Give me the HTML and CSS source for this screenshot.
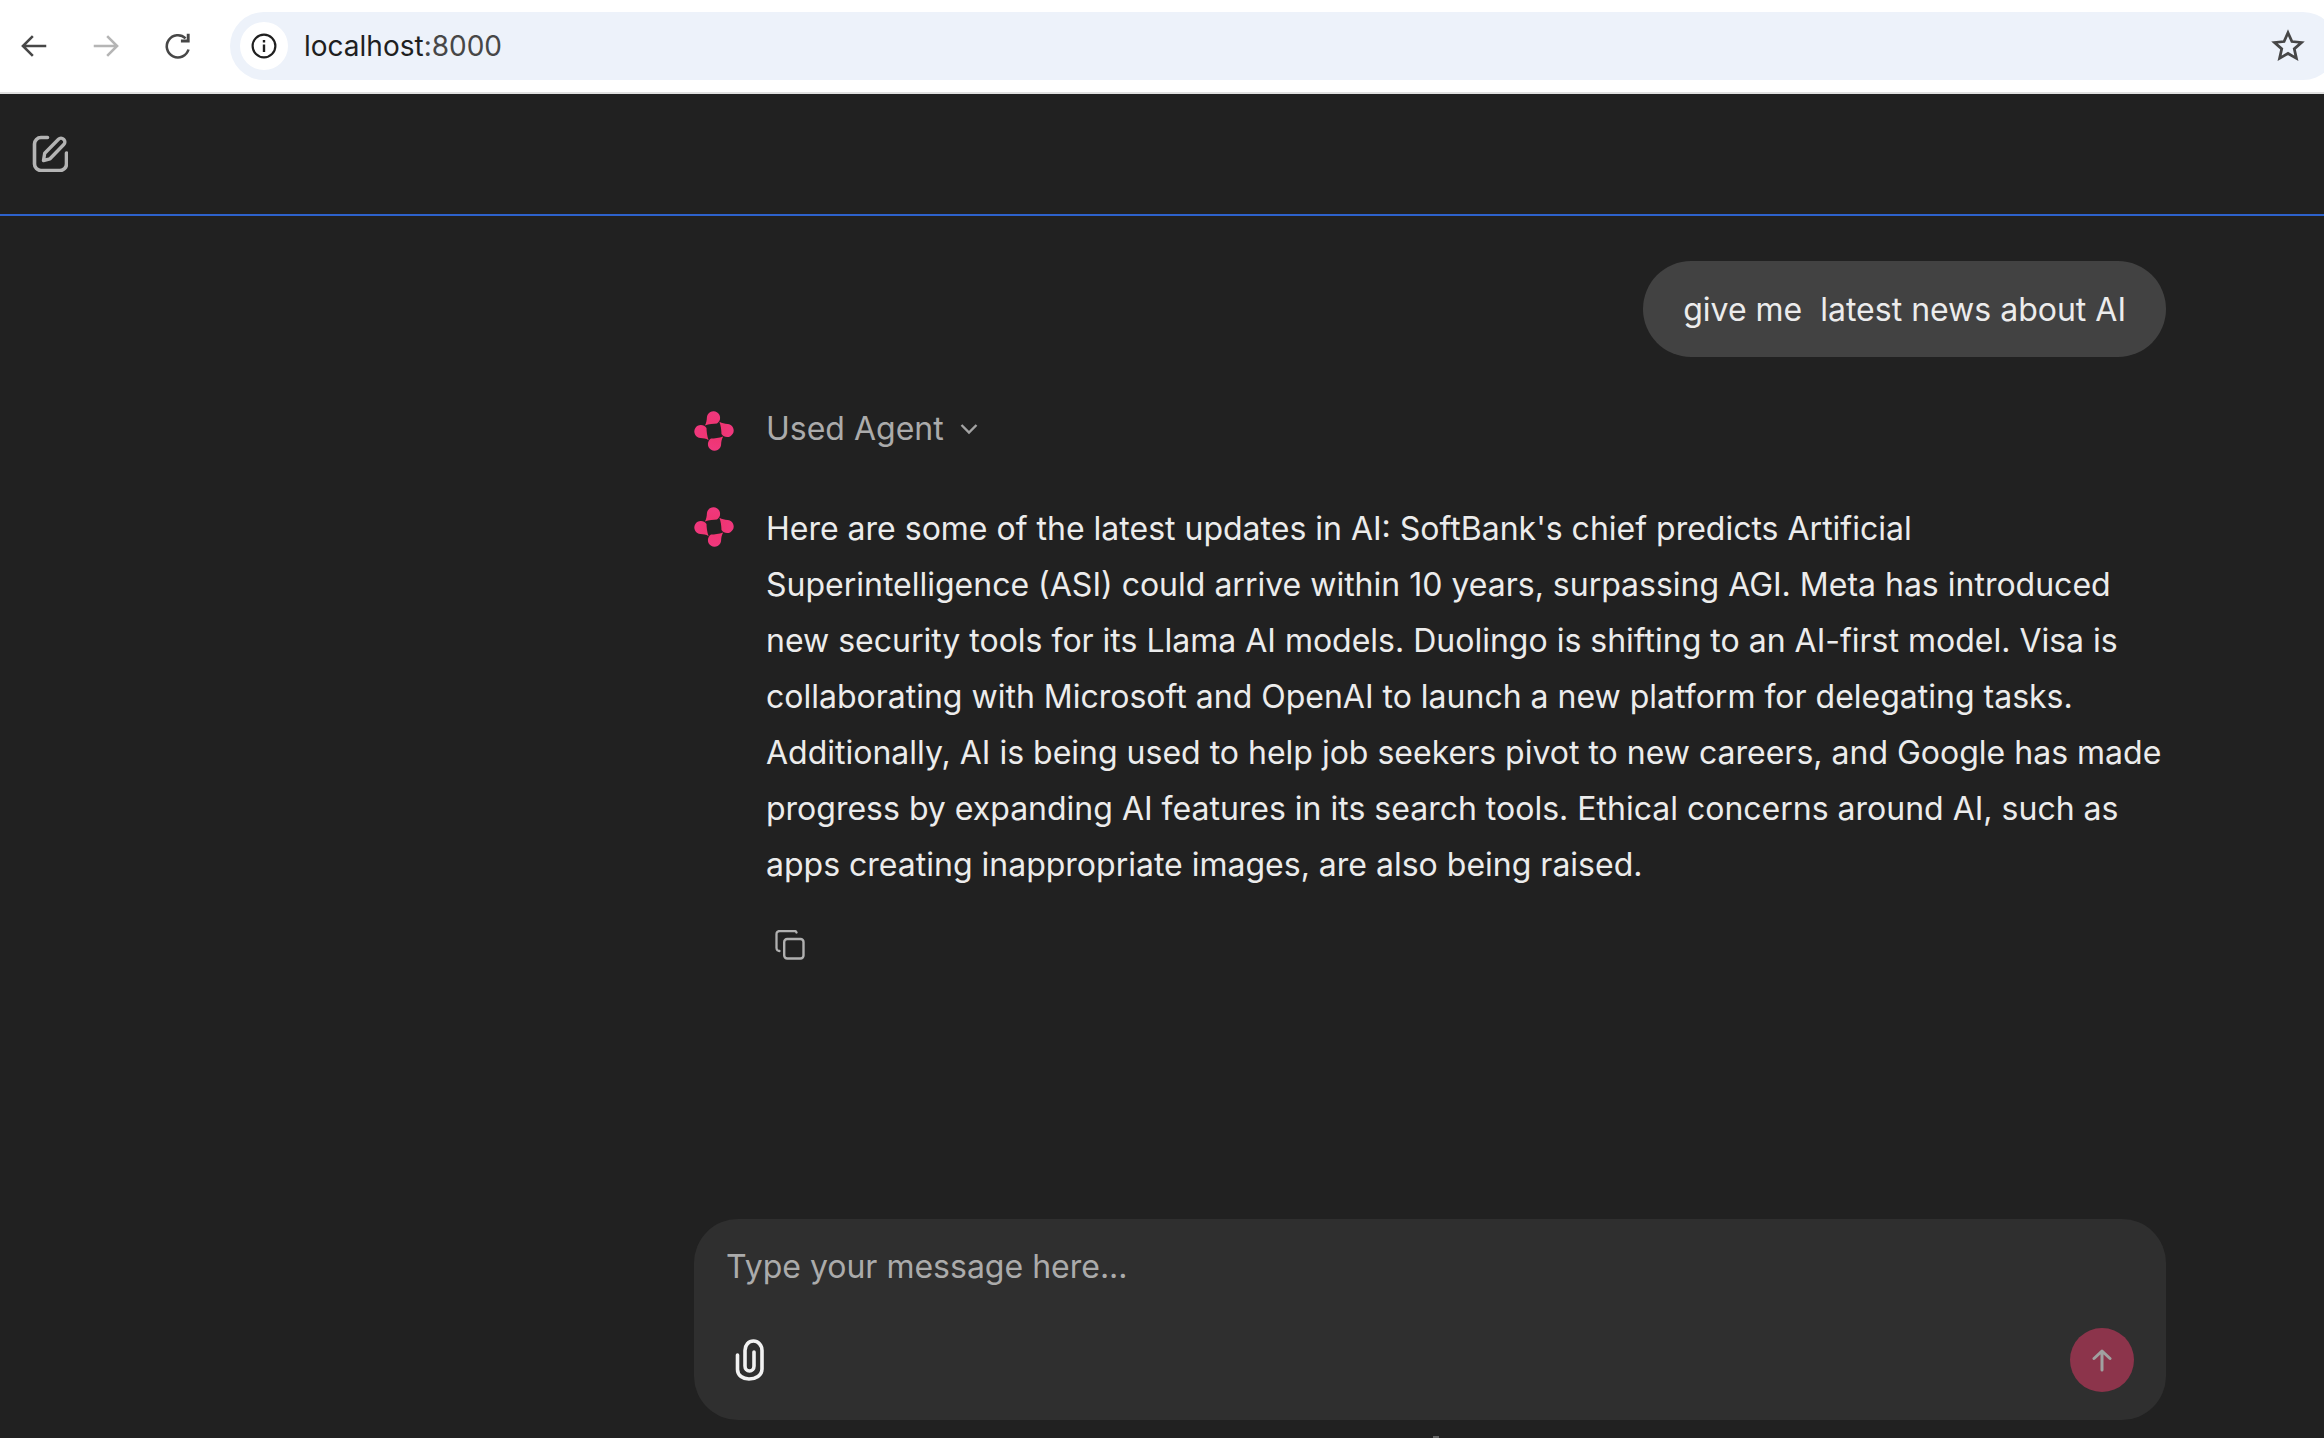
FILE: index.html
```html
<!DOCTYPE html>
<html lang="en">
<head>
<meta charset="utf-8">
<title>localhost:8000</title>
<link rel="stylesheet" href="styles.css">
</head>
<body>
<svg class="defs" width="0" height="0" aria-hidden="true">
  <defs>
    <linearGradient id="lg" gradientUnits="userSpaceOnUse" x1="24" y1="0" x2="16" y2="40">
      <stop offset="0" stop-color="#f0387f"/>
      <stop offset="1" stop-color="#ee2f5a"/>
    </linearGradient>
    <path id="drop" d="M10.800 14.600C12.400 12 12.800 9.300 12.900 6.500A6.600 6.600 0 1 1 23 12.500C19.500 12.600 15 13 10.800 14.600Z"/>
    <symbol id="logo" viewBox="0 0 40 40">
      <g fill="url(#lg)">
        <use href="#drop"/>
        <use href="#drop" transform="rotate(90 20 20)"/>
        <use href="#drop" transform="rotate(180 20 20)"/>
        <use href="#drop" transform="rotate(270 20 20)"/>
      </g>
    </symbol>
  </defs>
</svg>
<header class="browser">
  <nav class="nav">
    <svg class="nav-icon" viewBox="0 0 24 24"><path d="M22.500 12H2.500M11 3.500 2.500 12l8.500 8.500" fill="none" stroke="#474747" stroke-width="2.200"/></svg>
    <svg class="nav-icon" viewBox="0 0 24 24"><path d="M1.500 12h20M13 3.500l8.500 8.500-8.500 8.500" fill="none" stroke="#b5b5b5" stroke-width="2.200"/></svg>
    <svg class="nav-icon" viewBox="0 0 24 24"><path d="M21 15A9.500 9.500 0 1 1 18.500 5.500" fill="none" stroke="#474747" stroke-width="2.200"/><path d="M14.500 6.500h5V1.500h2.500v7.500h-7.500z" fill="#474747"/></svg>
  </nav>
  <div class="omnibox">
    <span class="site-info">
      <svg class="info-icon" viewBox="0 0 24 24"><circle cx="12" cy="12" r="10.500" fill="none" stroke="#1f1f1f" stroke-width="2"/><path d="M12 10.500v7M12 6.500v2.200" stroke="#1f1f1f" stroke-width="2.200"/></svg>
    </span>
    <span class="url"><span class="host">localhost</span>:8000</span>
    <svg class="star" viewBox="0 0 32 32"><path d="M16 3.500l3.700 8.300 9 .9-6.800 6 2 8.900L16 23l-7.900 4.600 2-8.900-6.800-6 9-.9z" fill="none" stroke="#474747" stroke-width="2.600"/></svg>
  </div>
</header>
<div class="app">
  <div class="toolbar">
    <svg class="edit" viewBox="0 0 36 38"><path d="M15.500 3.500H9A6.500 6.500 0 0 0 2.500 10v20A6.500 6.500 0 0 0 9 36.500h19a6.500 6.500 0 0 0 6.500-6.500v-11" fill="none" stroke="#b4b4b4" stroke-width="3.600" stroke-linecap="round"/><path d="M11.500 26.500l1.200-7.200L26.500 5.200a3.500 3.500 0 0 1 5 0l.3.300a3.500 3.500 0 0 1 0 5L18 24.800z" fill="none" stroke="#b4b4b4" stroke-width="3.400" stroke-linejoin="round"/></svg>
  </div>
  <main class="chat">
    <div class="bubble-row"><div class="bubble">give me&nbsp; latest news about AI</div></div>
    <div class="agent-row">
      <svg class="logo"><use href="#logo"/></svg>
      <span class="used">Used Agent</span>
      <svg class="chev" viewBox="0 0 18 12"><path d="M1.500 2l7.500 7.500L16.500 2" fill="none" stroke="#a3a3a3" stroke-width="2.400"/></svg>
    </div>
    <div class="answer">
      <svg class="logo"><use href="#logo"/></svg>
      <div class="answer-body">
        <p class="answer-text">Here are some of the latest updates in AI: SoftBank's chief predicts Artificial<br>Superintelligence (ASI) could arrive within 10 years, surpassing AGI. Meta has introduced<br>new security tools for its Llama AI models. Duolingo is shifting to an AI-first model. Visa is<br>collaborating with Microsoft and OpenAI to launch a new platform for delegating tasks.<br>Additionally, AI is being used to help job seekers pivot to new careers, and Google has made<br>progress by expanding AI features in its search tools. Ethical concerns around AI, such as<br>apps creating inappropriate images, are also being raised.</p>
        <svg class="copy" viewBox="0 0 30 30"><path d="M21.500 2.500a2 2 0 0 0-2-1.500H4.500A3 3 0 0 0 1.500 4v14a3 3 0 0 0 1 2.300 2.500 2.500 0 0 0 2 .7" fill="none" stroke="#b0b0b0" stroke-width="2.300" stroke-linecap="round"/><rect x="9.200" y="9" width="19.300" height="19.500" rx="3" fill="none" stroke="#b0b0b0" stroke-width="2.400"/></svg>
      </div>
    </div>
  </main>
  <section class="composer">
    <div class="placeholder">Type your message here...</div>
    <div class="composer-actions">
      <svg class="clip" viewBox="0 0 30 42"><path d="M2.500 16v14.500C2.500 36.500 8 40 14 40c6.500 0 13-3.500 13-10V11.500C27 6 23 2 18.500 2 13.500 2 10 6 10 11.500V27c0 3 2 5 4.500 5S19 30 19 27V13" fill="none" stroke="#f2f2f2" stroke-width="3.600" stroke-linecap="round"/></svg>
      <button class="send" type="button" aria-label="Send">
        <svg viewBox="0 0 20 24"><path d="M10 22V3M2 10.500 10 3l8 7.500" fill="none" stroke="#a0a0a0" stroke-width="3" stroke-linecap="round" stroke-linejoin="round"/></svg>
      </button>
    </div>
  </section>
  <div class="bottom-mark"></div>
</div>
</body>
</html>
```
FILE: styles.css
```css
* { box-sizing: border-box; }
html, body { margin: 0; height: 100%; }
body {
  width: 2324px;
  height: 1438px;
  overflow: hidden;
  display: flex;
  flex-direction: column;
  background: #212121;
  font-family: Inter, "Liberation Sans", sans-serif;
}
.defs { display: block; height: 0; }
.browser {
  height: 94px;
  flex: none;
  display: flex;
  align-items: flex-start;
  background: #fff;
  border-bottom: 2px solid #e0e0e0;
  padding-top: 12px;
  overflow: hidden;
}
.nav {
  width: 230px;
  height: 68px;
  flex: none;
  display: flex;
  align-items: center;
  gap: 44px;
  padding-left: 20px;
}
.nav-icon { width: 28px; height: 28px; flex: none; }
.omnibox {
  flex: none;
  width: 2107px;
  height: 68px;
  display: flex;
  align-items: center;
  background: #edf2fa;
  border-radius: 34px;
  padding-left: 10px;
}
.site-info {
  width: 48px;
  height: 48px;
  background: #fff;
  border-radius: 24px;
  display: flex;
  align-items: center;
  justify-content: center;
  flex: none;
}
.info-icon { width: 26px; height: 26px; }
.url {
  margin-left: 16px;
  font-size: 28px;
  color: #474747;
  flex: 1;
}
.host { color: #1f1f1f; }
.star { width: 34px; height: 34px; flex: none; margin-right: 32px; }
.app { flex: 1; display: flex; flex-direction: column; min-height: 0; }
.toolbar {
  height: 122px;
  flex: none;
  border-bottom: 2px solid #2d62cc;
  padding: 40px 0 0 32px;
}
.edit { display: block; width: 36px; height: 38px; }
.chat {
  flex: 1;
  width: 1472px;
  margin-left: 694px;
  min-height: 0;
  padding-top: 45px;
}
.bubble-row { display: flex; justify-content: flex-end; }
.bubble {
  height: 96px;
  padding: 0 40px;
  display: flex;
  align-items: center;
  background: #424242;
  border-radius: 48px;
  font-size: 32px;
  color: #ececec;
  white-space: pre;
}
.agent-row {
  display: flex;
  align-items: center;
  height: 41px;
  margin-top: 51px;
}
.agent-row .logo { align-self: flex-start; margin-top: 3px; }
.logo { width: 40px; height: 40px; flex: none; display: block; }
.used {
  margin-left: 32px;
  font-size: 32px;
  color: #ababab;
}
.chev { width: 18px; height: 12px; margin-left: 16px; }
.answer {
  display: flex;
  margin-top: 58px;
}
.answer-body { margin-left: 32px; flex: 1; }
.answer-text {
  margin: -6px 0 0;
  font-size: 32px;
  line-height: 56px;
  color: #ececec;
  white-space: nowrap;
}
.copy { display: block; width: 30px; height: 30px; margin: 37px 0 0 9px; }
.composer {
  flex: none;
  width: 1472px;
  height: 201px;
  margin: 0 0 16px 694px;
  background: #2f2f2f;
  border-radius: 44px;
  padding: 25px 32px 0;
}
.placeholder {
  font-size: 32px;
  line-height: 46px;
  color: #ababab;
}
.composer-actions {
  display: flex;
  justify-content: space-between;
  align-items: center;
  margin-top: 38px;
}
.clip { width: 30px; height: 42px; margin-left: 9px; display: block; }
.send {
  width: 64px;
  height: 64px;
  border: 0;
  padding: 0;
  border-radius: 50%;
  background: #8c344b;
  display: flex;
  align-items: center;
  justify-content: center;
}
.send svg { width: 20px; height: 24px; }
.bottom-mark {
  flex: none;
  width: 6px;
  height: 2px;
  margin-left: 1433px;
  background: #666;
}
```
